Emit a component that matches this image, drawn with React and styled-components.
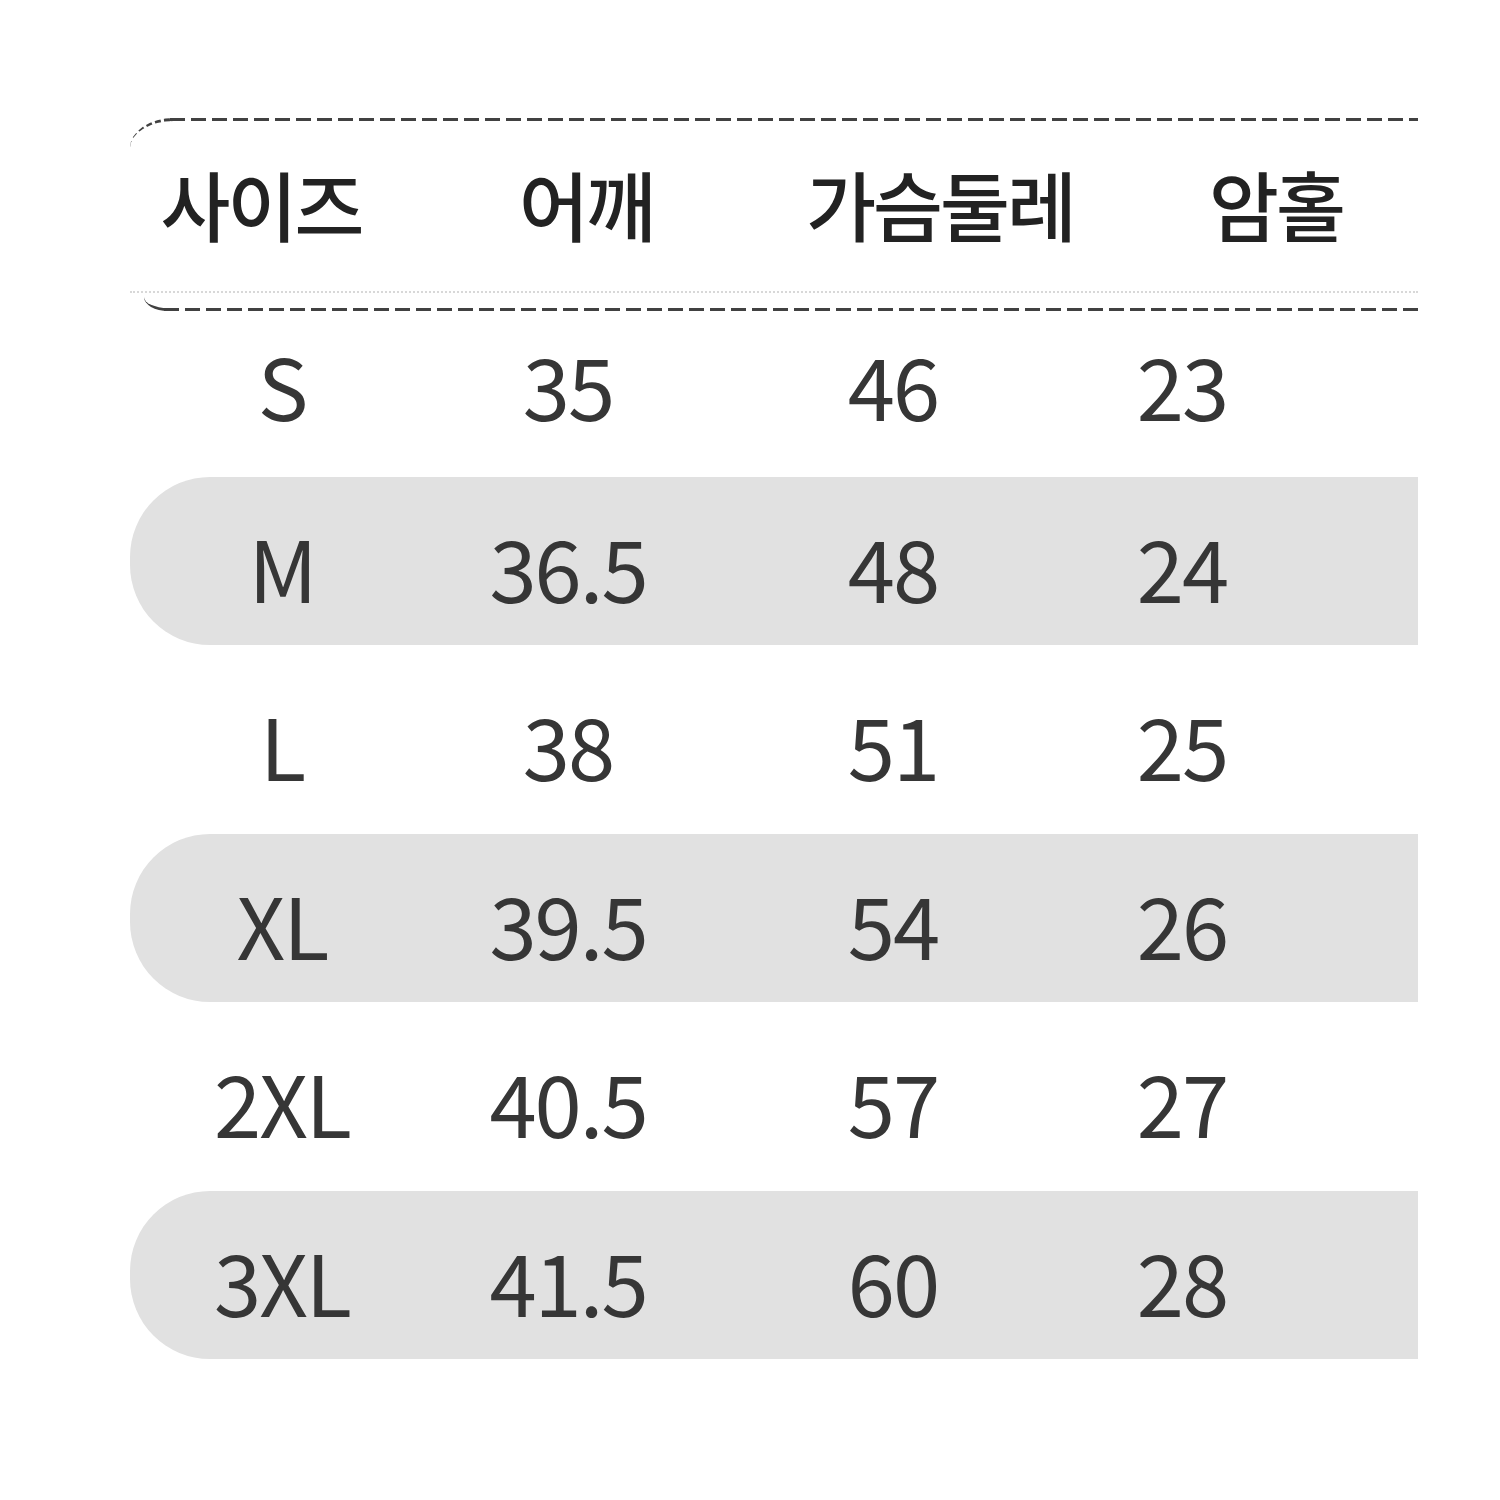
import styled, { createGlobalStyle } from "styled-components";

const GlobalStyle = createGlobalStyle`
  html, body {
    margin: 0;
    padding: 0;
    background: #ffffff;
  }
  body {
    font-family: "Noto Sans CJK KR", "Noto Sans", sans-serif;
    color: #333333;
  }
`;

const Page = styled.div`
  width: 1500px;
  height: 1500px;
  padding: 118px 82px 0 130px;
  box-sizing: border-box;
`;

const dash = "repeating-linear-gradient(to right, #414141 0 15px, transparent 15px 21px)";

// dashed rules top and bottom, the left ends bend round like a rounded frame
const Header = styled.div`
  position: relative;
  padding: 3px 0 18px;
  background:
    ${dash} 40px 0 / calc(100% - 40px) 3px no-repeat,
    ${dash} 34px 100% / calc(100% - 34px) 3px no-repeat;

  &::before {
    content: "";
    position: absolute;
    left: 0;
    top: 0;
    width: 44px;
    height: 30px;
    border-top: 3px dashed #414141;
    border-top-left-radius: 44px 30px;
    box-sizing: border-box;
  }

  &::after {
    content: "";
    position: absolute;
    left: 14px;
    bottom: 0;
    width: 24px;
    height: 14px;
    border-bottom: 3px solid #414141;
    border-bottom-left-radius: 24px 14px;
    box-sizing: border-box;
  }
`;

const HeaderInner = styled.div`
  display: grid;
  grid-template-columns: 262px 388px 320px 352px;
  align-items: center;
  height: 172px;
  border-bottom: 2px dotted #d8d8d8;
  box-sizing: border-box;
  padding-bottom: 6px;
`;

const HeadCell = styled.div`
  text-align: center;
  font-size: 76px;
  font-weight: 500;
  letter-spacing: -3px;
  line-height: 1;
  color: #222222;
`;

const Row = styled.div`
  display: grid;
  grid-template-columns: 304px 268px 382px 196px 1fr;
  align-items: center;
  box-sizing: border-box;
  height: ${(p) => p.$h}px;
  padding-top: ${(p) => p.$pt}px;
  padding-bottom: ${(p) => p.$pb}px;
  background: ${(p) => (p.$band ? "#e1e1e1" : "transparent")};
  border-radius: ${(p) => (p.$band ? "80px 0 0 80px" : "0")};
`;

const Cell = styled.div`
  text-align: center;
  font-size: 85px;
  font-weight: 400;
  line-height: 1;
  letter-spacing: -2px;
  color: #363636;
`;

const headers = ["사이즈", "어깨", "가슴둘레", "암홀"];

const rows = [
  ["S", "35", "46", "23"],
  ["M", "36.5", "48", "24"],
  ["L", "38", "51", "25"],
  ["XL", "39.5", "54", "26"],
  ["2XL", "40.5", "57", "27"],
  ["3XL", "41.5", "60", "28"],
];

export default function App() {
  return (
    <>
      <GlobalStyle />
      <Page>
        <Header>
          <HeaderInner>
            {headers.map((h) => (
              <HeadCell key={h}>{h}</HeadCell>
            ))}
          </HeaderInner>
        </Header>
        {rows.map((r, i) => {
          const band = i % 2 === 1;
          const first = i === 0;
          const h = first ? 166 : band ? 168 : 189;
          return (
            <Row
              key={r[0]}
              $band={band}
              $h={h}
              $pt={first ? 0 : 8}
              $pb={first ? 22 : 0}
            >
              {r.map((v, j) => (
                <Cell key={j}>{v}</Cell>
              ))}
            </Row>
          );
        })}
      </Page>
    </>
  );
}
